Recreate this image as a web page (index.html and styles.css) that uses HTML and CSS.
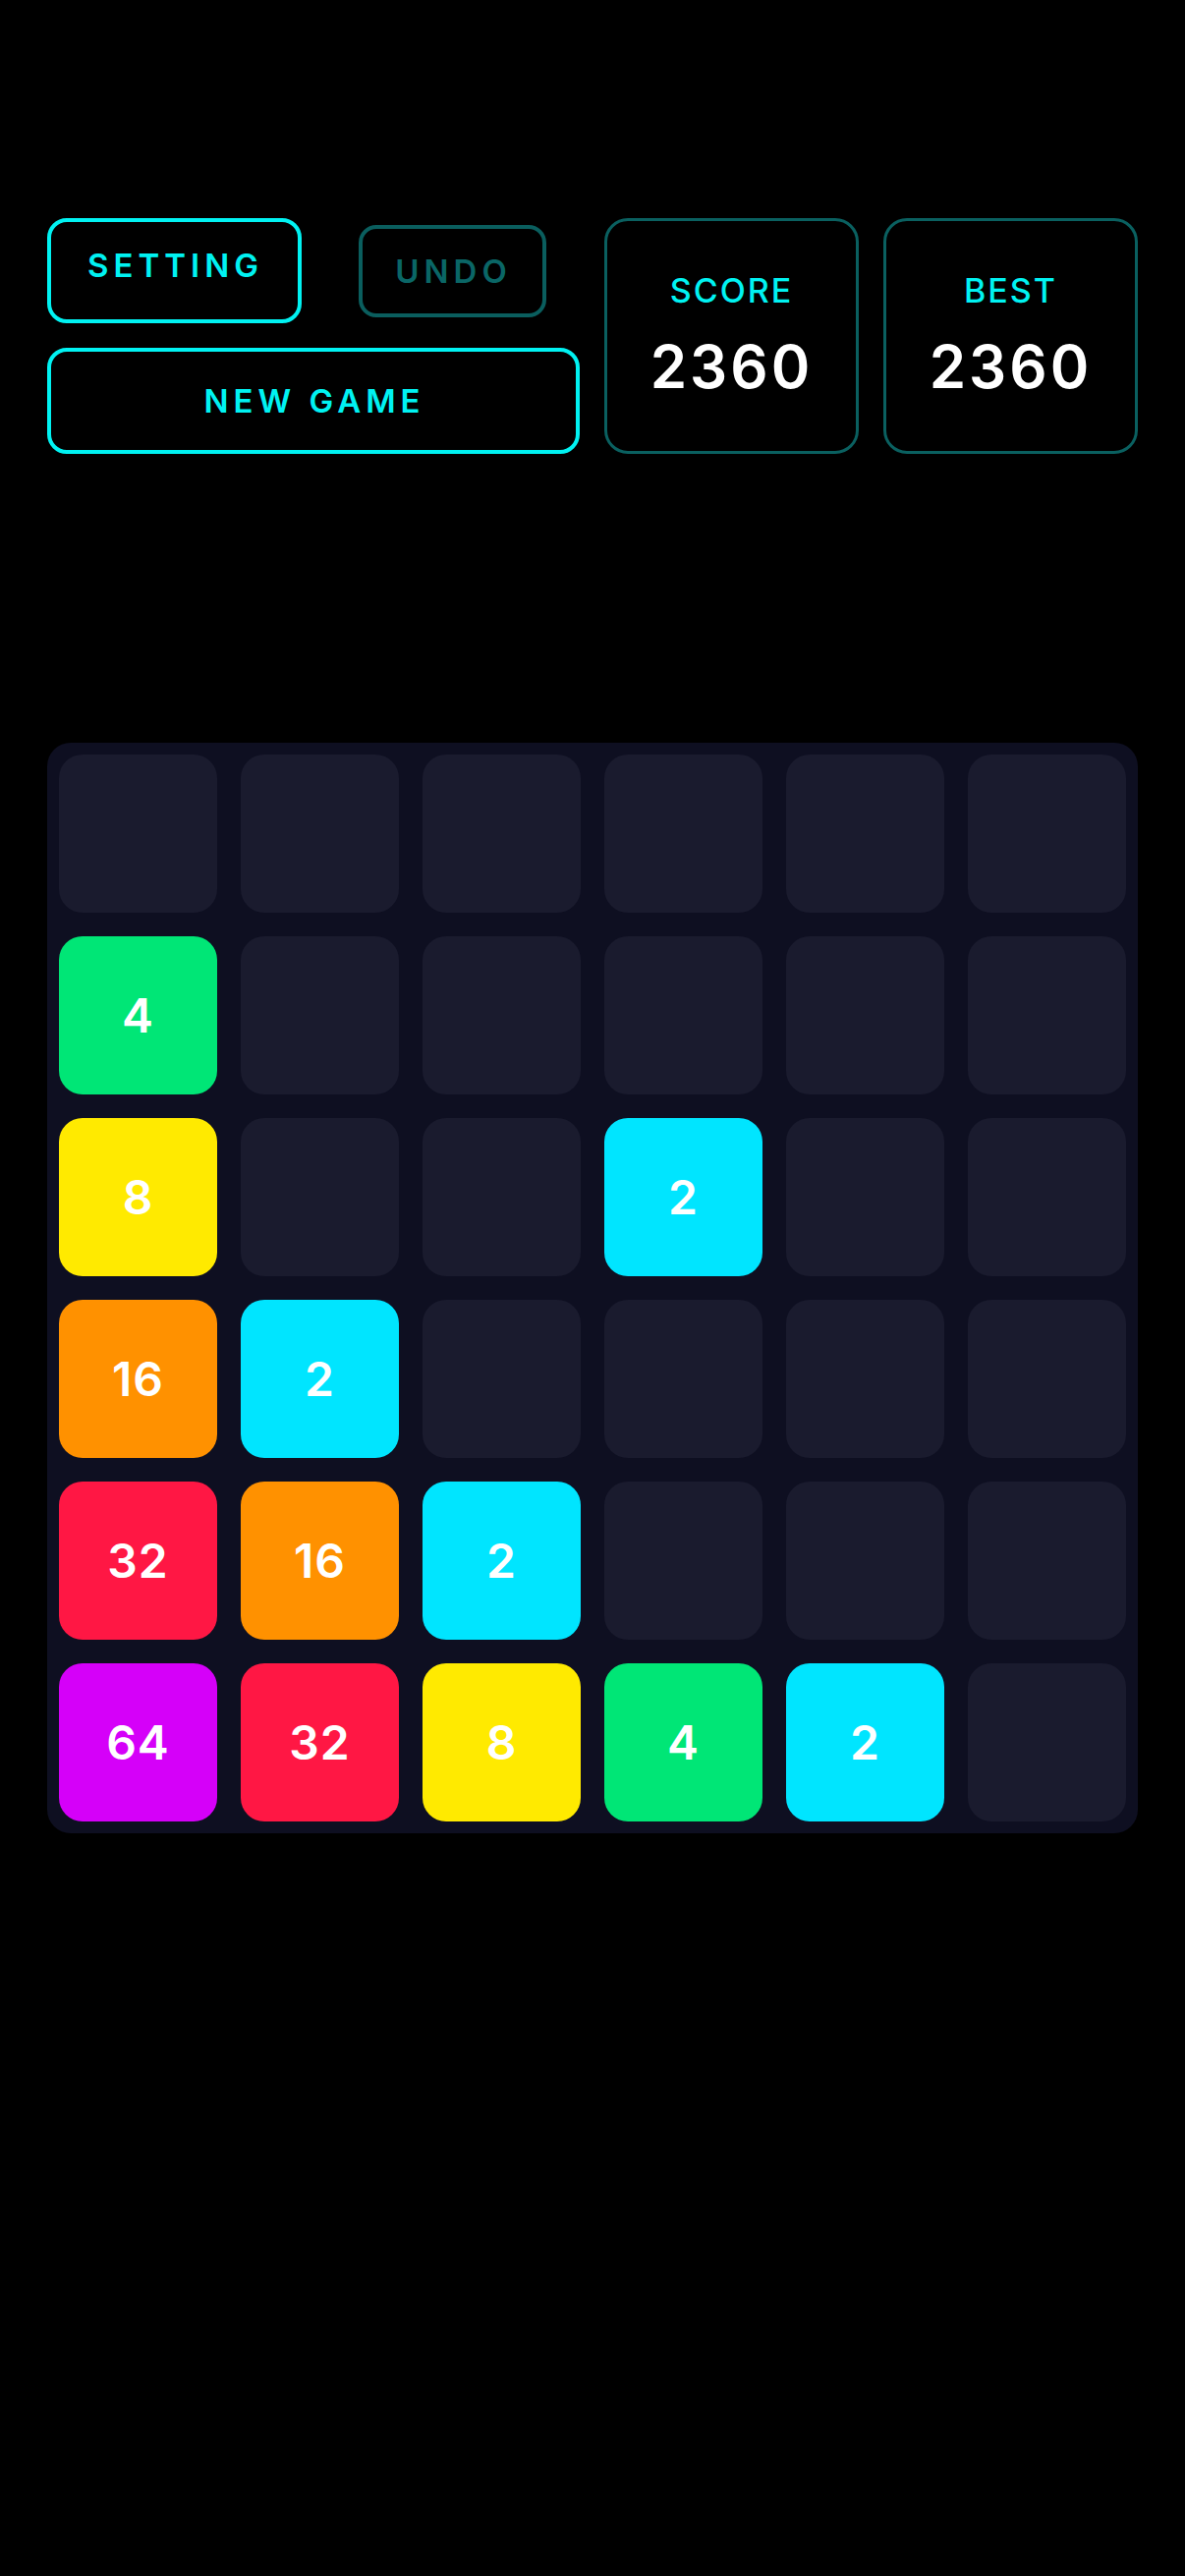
FILE: index.html
```html
<!DOCTYPE html>
<html>
<head>
    <title>2048</title>
    <link rel="stylesheet" href="styles.css">
</head>
<body>
    <div class="game">
        <div class="header">
            <div class="controls">
                <div class="control-row">
                    <div class="slot"><div class="btn btn-setting">SETTING</div></div>
                    <div class="slot"><div class="btn btn-undo">UNDO</div></div>
                </div>
                <div class="btn btn-new">NEW GAME</div>
            </div>
            <div class="score-box">
                <div class="score-label">SCORE</div>
                <div class="score-value">2360</div>
            </div>
            <div class="score-box">
                <div class="score-label">BEST</div>
                <div class="score-value">2360</div>
            </div>
        </div>

        <div class="board">
            <div class="tile"></div>
            <div class="tile"></div>
            <div class="tile"></div>
            <div class="tile"></div>
            <div class="tile"></div>
            <div class="tile"></div>

            <div class="tile t4">4</div>
            <div class="tile"></div>
            <div class="tile"></div>
            <div class="tile"></div>
            <div class="tile"></div>
            <div class="tile"></div>

            <div class="tile t8">8</div>
            <div class="tile"></div>
            <div class="tile"></div>
            <div class="tile t2">2</div>
            <div class="tile"></div>
            <div class="tile"></div>

            <div class="tile t16">16</div>
            <div class="tile t2">2</div>
            <div class="tile"></div>
            <div class="tile"></div>
            <div class="tile"></div>
            <div class="tile"></div>

            <div class="tile t32">32</div>
            <div class="tile t16">16</div>
            <div class="tile t2">2</div>
            <div class="tile"></div>
            <div class="tile"></div>
            <div class="tile"></div>

            <div class="tile t64">64</div>
            <div class="tile t32">32</div>
            <div class="tile t8">8</div>
            <div class="tile t4">4</div>
            <div class="tile t2">2</div>
            <div class="tile"></div>
        </div>
    </div>
</body>
</html>
```

FILE: styles.css
```css
body {
    margin: 0;
    background-color: #000;
    font-family: Inter, "Noto Sans", sans-serif;
}
.game {
    width: 1110px;
    padding: 222px 48px 0;
}
.header {
    display: flex;
    gap: 25px;
    height: 240px;
}
.controls {
    width: 542px;
    display: flex;
    flex-direction: column;
    gap: 25px;
}
.control-row {
    display: flex;
    gap: 24px;
    height: 107px;
}
.slot {
    flex: 1;
    display: flex;
    align-items: center;
    justify-content: center;
}
.btn {
    box-sizing: border-box;
    display: flex;
    align-items: center;
    justify-content: center;
    font-size: 33px;
    font-weight: 600;
    letter-spacing: 5px;
    text-indent: 2px;
    color: #00f2f2;
    border: 4px solid #00f2f2;
    border-radius: 20px;
}
.btn-setting {
    width: 100%;
    height: 100%;
    padding-bottom: 11px;
}
.btn-undo {
    width: 191px;
    height: 94px;
    color: #0a6666;
    border-color: #0a5e5e;
    border-radius: 18px;
}
.btn-new {
    height: 108px;
}
.score-box {
    flex: 1;
    box-sizing: border-box;
    display: flex;
    flex-direction: column;
    align-items: center;
    justify-content: center;
    gap: 21px;
    border: 3px solid #0a6060;
    border-radius: 24px;
}
.score-label {
    font-size: 34px;
    font-weight: 500;
    letter-spacing: 2px;
    color: #00f2f2;
}
.score-value {
    font-size: 60px;
    font-weight: 600;
    letter-spacing: 3px;
    color: #fff;
}
.board {
    margin-top: 294px;
    box-sizing: border-box;
    width: 1110px;
    height: 1110px;
    padding: 12px;
    display: grid;
    grid-template-columns: repeat(6, 161px);
    grid-auto-rows: 161px;
    gap: 24px;
    background-color: #0e0f21;
    border-radius: 24px;
}
.tile {
    display: flex;
    align-items: center;
    justify-content: center;
    border-radius: 24px;
    background-color: #1a1b2e;
    color: #fff;
    font-size: 48px;
    font-weight: 600;
    letter-spacing: 1px;
}
.t2 { background-color: #00e5ff; }
.t4 { background-color: #00e676; }
.t8 { background-color: #ffea00; }
.t16 { background-color: #ff9100; }
.t32 { background-color: #ff1744; }
.t64 { background-color: #d500f9; }
```
